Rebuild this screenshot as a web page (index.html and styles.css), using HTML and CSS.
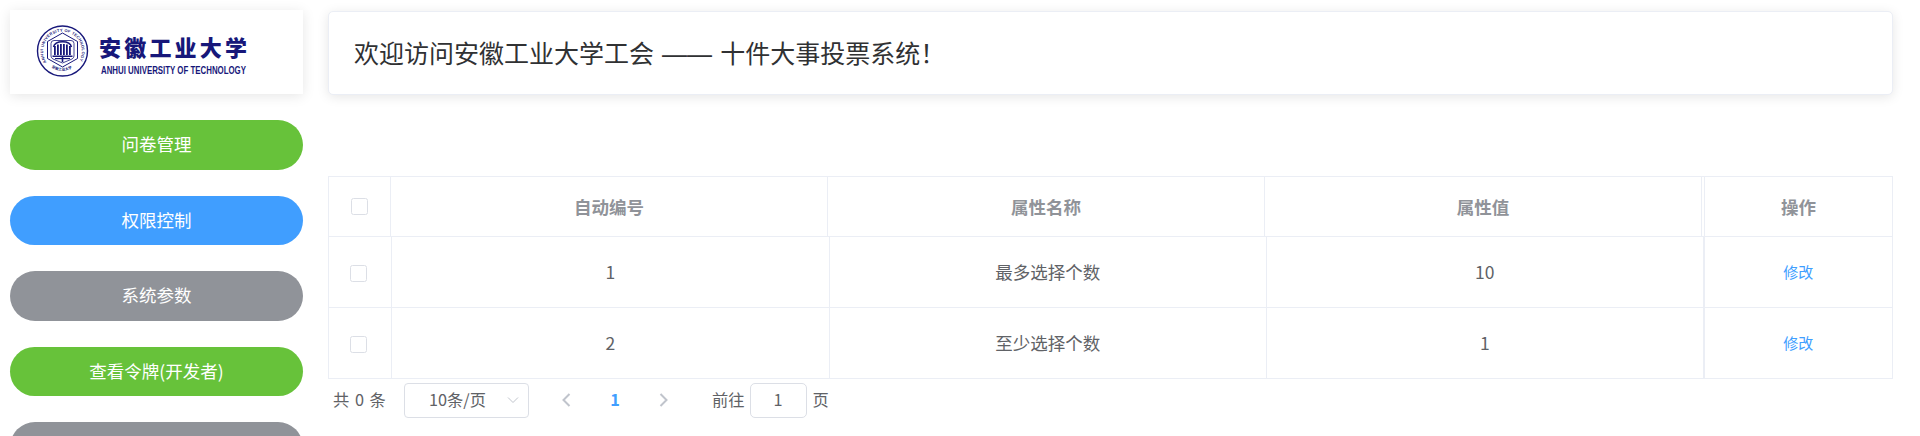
FILE: index.html
```html
<!DOCTYPE html>
<html lang="zh-CN">
<head>
<meta charset="utf-8">
<title>系统参数</title>
<link rel="stylesheet" href="styles.css">
</head>
<body>
<div class="page">
  <aside class="sidebar">
    <div class="logo">
      <svg class="logo-svg" width="293" height="84" viewBox="0 0 293 84">
        <defs>
          <path id="ringTop" d="M37.6 53.5 A19.4 19.4 0 1 1 67.4 53.5"/>
          <path id="ringBottom" d="M36 52 A20 20 0 0 0 69 52"/>
        </defs>
        <g fill="none" stroke="#17177a">
          <circle cx="52.5" cy="41" r="25" stroke-width="1.4"/>
          <path d="M52.5 23 L67.5 31.5 V48.5 L52.5 57 L37.5 48.5 V31.5 Z" stroke-width="1"/>
          <path d="M44 30.5 H61 Q64 30.5 64 33.5 V46 Q64 48 62 49 L52.5 53 L43 49 Q41 48 41 46 V33.5 Q41 30.5 44 30.5 Z" stroke-width="0.8"/>
          <path d="M43.5 37 C45 30 60 30 61.5 37" stroke-width="1.4"/>
        </g>
        <g fill="#17177a">
          <rect x="44" y="36" width="1.8" height="9"/>
          <rect x="47" y="34.5" width="1.8" height="10.5"/>
          <rect x="50" y="34" width="1.8" height="11"/>
          <rect x="53" y="34" width="1.8" height="11"/>
          <rect x="56" y="34.5" width="1.8" height="10.5"/>
          <rect x="59" y="36" width="1.8" height="9"/>
          <rect x="42.5" y="45.5" width="20" height="1.5"/>
          <rect x="45" y="48" width="15" height="1.2"/>
          <rect x="51.7" y="47" width="1.6" height="5"/>
        </g>
        <text class="seal-text"><textPath href="#ringTop" startOffset="2%" textLength="82">ANHUI UNIVERSITY OF TECHNOLOGY</textPath></text>
        <text class="seal-cn"><textPath href="#ringBottom" startOffset="20%">安徽工业大学</textPath></text>
        <text class="logo-cn" x="89" y="46" textLength="148">安徽工业大学</text>
        <text class="logo-en" x="91" y="64" textLength="145" lengthAdjust="spacingAndGlyphs">ANHUI UNIVERSITY OF TECHNOLOGY</text>
      </svg>
    </div>
    <nav class="menu">
      <button class="pill pill-green">问卷管理</button>
      <button class="pill pill-blue">权限控制</button>
      <button class="pill pill-gray">系统参数</button>
      <button class="pill pill-green">查看令牌(开发者)</button>
      <button class="pill pill-gray"></button>
    </nav>
  </aside>
  <main class="main">
    <header class="banner"><span>欢迎访问安徽工业大学工会 <span class="dash">——</span> 十件大事投票系统！</span></header>
    <section class="table">
      <div class="row row-head">
        <div class="cell"><span class="check"></span></div>
        <div class="cell">自动编号</div>
        <div class="cell">属性名称</div>
        <div class="cell">属性值</div>
        <div class="cell gutter"></div>
        <div class="cell">操作</div>
      </div>
      <div class="row row-body">
        <div class="cell"><span class="check"></span></div>
        <div class="cell">1</div>
        <div class="cell">最多选择个数</div>
        <div class="cell">10</div>
        <div class="cell"><a class="link">修改</a></div>
      </div>
      <div class="row row-body">
        <div class="cell"><span class="check"></span></div>
        <div class="cell">2</div>
        <div class="cell">至少选择个数</div>
        <div class="cell">1</div>
        <div class="cell"><a class="link">修改</a></div>
      </div>
    </section>
    <div class="pager">
      <span class="total">共 0 条</span>
      <div class="select"><span>10条/页</span>
        <svg class="caret" width="12" height="8" viewBox="0 0 12 8"><path d="M1 1.5 L6 6.5 L11 1.5" fill="none" stroke="#c0c4cc" stroke-width="1"/></svg>
      </div>
      <svg class="prev" width="9" height="14" viewBox="0 0 9 14"><path d="M7.5 1 L1.5 7 L7.5 13" fill="none" stroke="#c0c4cc" stroke-width="2"/></svg>
      <span class="current">1</span>
      <svg class="next" width="9" height="14" viewBox="0 0 9 14"><path d="M1.5 1 L7.5 7 L1.5 13" fill="none" stroke="#c0c4cc" stroke-width="2"/></svg>
      <span class="goto">前往</span>
      <div class="jump">1</div>
      <span class="unit">页</span>
    </div>
  </main>
</div>
</body>
</html>
```

FILE: styles.css
```css
* { box-sizing: border-box; }
html, body { margin: 0; height: 436px; overflow: hidden; background: #fff; }
body { font-family: "Noto Sans CJK SC", "Noto Sans", sans-serif; color: #606266; }

.page { display: flex; align-items: flex-start; height: 436px; overflow: hidden; }

.sidebar { width: 328px; flex: none; padding: 10px 25px 0 10px; }
.logo { height: 84px; background: #fff; box-shadow: 0 2px 12px rgba(0,0,0,.1); }
.logo-svg { display: block; }
.seal-text { font: 700 4px "Liberation Sans", sans-serif; fill: #17177a; }
.seal-cn { font: 700 3.6px "Noto Sans CJK SC", sans-serif; fill: #17177a; }
.logo-cn { font: 900 22px "Noto Sans CJK SC", sans-serif; fill: #17177a; }
.logo-en { font: 700 10.5px "Liberation Sans Narrow", "Liberation Sans", sans-serif; fill: #17177a; }

.menu { display: flex; flex-direction: column; gap: 26px; margin-top: 26px; }
.pill { display: block; width: 100%; height: 49.6px; flex: none; border: 0; border-radius: 25px; padding: 0 0 2px; color: #fff; font: 400 17.5px "Noto Sans CJK SC", sans-serif; }
.pill-green { background: #67c23a; }
.pill-blue { background: #409eff; }
.pill-gray { background: #909399; }

.main { width: 1565px; flex: none; padding-top: 11px; }
.banner { height: 84px; display: flex; align-items: center; padding: 0 0 3px 25px; background: #fff; border: 1px solid #ebeef5; border-radius: 5px; box-shadow: 0 2px 12px rgba(0,0,0,.1); font-size: 25px; color: #303133; word-spacing: 2.5px; }
.dash { font-family: "Liberation Sans", sans-serif; }

.table { margin-top: 81px; border: 1px solid #ebeef5; }
.row { display: grid; border-bottom: 1px solid #ebeef5; }
.row:last-child { border-bottom: 0; height: 70px; }
.row-head { height: 60px; grid-template-columns: 62px 437px 437px 437px 3px 1fr; font-size: 17.5px; font-weight: 700; color: #909399; }
.row-body { height: 71px; grid-template-columns: 63px 437.5px 437.5px 437.5px 1fr; font-size: 17.5px; }
.row-body .cell { padding-bottom: 2px; }
.row-body .cell:nth-child(4) { border-right-width: 2px; }
.cell { display: flex; align-items: center; justify-content: center; border-right: 1px solid #ebeef5; min-width: 0; }
.cell:last-child { border-right: 0; }
.row-body .cell:first-child { padding: 2px 4px 0 0; }
.check { display: block; width: 17px; height: 17px; border: 1px solid #dcdfe6; border-radius: 2.5px; background: #fff; }
.link { color: #409eff; font-size: 15px; }

.pager { display: flex; align-items: center; height: 35px; margin-top: 4px; font-size: 16.25px; color: #606266; }
.total { margin-left: 5px; width: 71px; flex: none; word-spacing: 2px; padding-bottom: 3px; }
.select { position: relative; display: flex; align-items: center; width: 125px; height: 35px; flex: none; padding: 0 0 3px 24px; border: 1px solid #dcdfe6; border-radius: 4px; }
.caret { position: absolute; right: 9px; top: 12px; }
.prev { margin: 0 0 2px 33px; flex: none; }
.current { margin-left: 39px; width: 10px; flex: none; text-align: center; color: #409eff; font-weight: 700; padding-bottom: 3px; }
.next { margin: 0 0 2px 39px; flex: none; }
.goto { margin-left: 44px; flex: none; padding-bottom: 3px; }
.jump { display: flex; align-items: center; justify-content: center; width: 57px; height: 35px; margin-left: 5px; flex: none; padding-bottom: 3px; border: 1px solid #dcdfe6; border-radius: 5px; }
.unit { margin-left: 6px; flex: none; padding-bottom: 3px; }
```
